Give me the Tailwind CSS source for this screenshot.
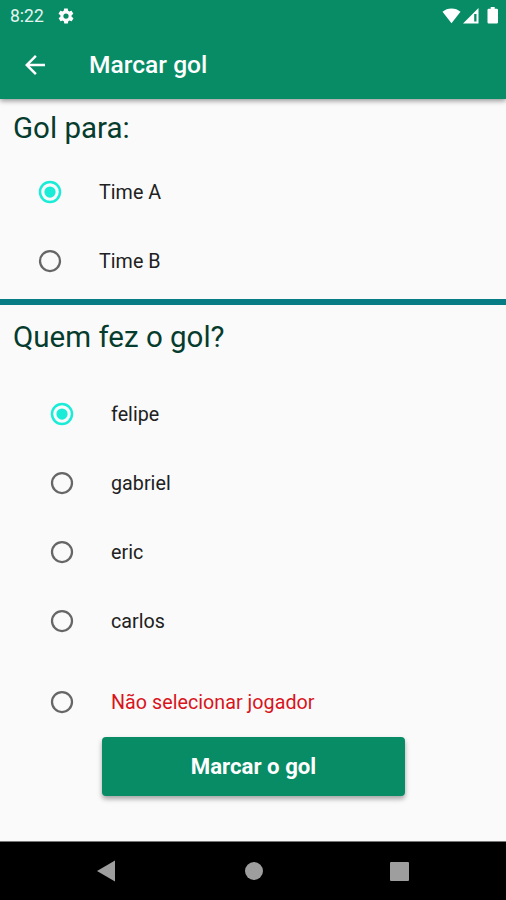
<!DOCTYPE html>
<html lang="pt-BR">
<head>
<meta charset="utf-8">
<meta name="viewport" content="width=device-width, initial-scale=1">
<title>Marcar gol</title>
<script src="https://cdn.jsdelivr.net/npm/@tailwindcss/browser@4"></script>
</head>
<body class="w-[506px] h-[900px] overflow-hidden bg-[#fafafa] flex flex-col font-[Roboto,sans-serif] text-[#212121]">
<header class="h-[99px] shrink-0 bg-[#078c66] text-white shadow-[0_2px_5px_rgba(0,0,0,0.4)] relative">
  <div class="h-[30px] flex items-center pl-2.5 pr-[7px]">
    <span class="text-[17.5px] leading-[30px] pt-[2px] text-white/90 w-[47px]">8:22</span>
    <svg class="w-[18px] h-[18px] mt-px" viewBox="0 0 24 24" fill="currentColor"><path d="M19.4 13c0-.3.1-.6.1-1s0-.7-.1-1l2.1-1.600c.2-.2.2-.4.1-.6l-2-3.500c-.1-.2-.4-.3-.6-.2l-2.500 1c-.5-.4-1.100-.7-1.700-1l-.4-2.600c0-.3-.2-.5-.5-.5h-4c-.2 0-.4.2-.5.4l-.4 2.700c-.6.2-1.100.6-1.700 1l-2.500-1c-.2-.1-.5 0-.6.2l-2 3.500c-.1.200-.1.500.1.600L4.600 11c0 .3-.1.700-.1 1s0 .7.100 1l-2.100 1.700c-.2.100-.2.400-.1.600l2 3.500c.1.200.4.300.6.200l2.500-1c.5.400 1.100.7 1.700 1l.4 2.600c0 .2.200.4.5.4h4c.2 0 .4-.2.500-.4l.4-2.700c.6-.2 1.100-.6 1.700-1l2.500 1c.2.100.5 0 .6-.2l2-3.500c.1-.2.1-.5-.1-.6L19.400 13zM12 15.500a3.500 3.500 0 1 1 0-7 3.500 3.500 0 0 1 0 7z"/></svg>
    <div class="ml-auto flex items-center gap-[2px]">
      <svg class="w-[19px] h-[17px]" viewBox="0 0 19 17" fill="currentColor"><path d="M9.500 16.300 0.500 4.800C3 2.700 6 1.500 9.500 1.500s6.500 1.200 9 3.300z"/></svg>
      <svg class="w-[16px] h-[17px]" viewBox="0 0 16 17"><path fill="currentColor" fill-rule="evenodd" d="M0 16.500 15.500 1v15.500zM11.200 7v7.500h2.300V7z"/></svg>
      <svg class="w-[12px] h-[17px] ml-[6px]" viewBox="0 0 12 17" fill="currentColor"><path d="M3.700 0h4v1.700h2.100q1.200 0 1.200 1.200v12.400q0 1.200-1.200 1.200H1.700q-1.200 0-1.200-1.200V2.900q0-1.200 1.200-1.200h2z"/></svg>
    </div>
  </div>
  <div class="h-[69px] flex items-center pl-[20px]">
    <svg class="w-[30px] h-[30px]" viewBox="0 0 24 24" fill="currentColor"><path d="M20 11H7.830l5.590-5.590L12 4l-8 8 8 8 1.410-1.410L7.830 13H20v-2z"/></svg>
    <h1 class="ml-[39px] pt-[2px] text-[24.6px] font-medium">Marcar gol</h1>
  </div>
</header>
<main class="flex-1 flex flex-col">
  <section class="h-[200px] shrink-0">
    <h2 class="h-[59px] pl-[13px] text-[29.5px] leading-[59px] text-[#063c2d]">Gol para:</h2>
    <div class="h-[69px] flex items-center pl-[35px]">
      <svg class="w-[30px] h-[30px] mb-[2px] text-[#1aecd8]" viewBox="0 0 24 24"><circle cx="12" cy="12" r="8" fill="none" stroke="currentColor" stroke-width="2"/><circle cx="12" cy="12" r="4.500" fill="currentColor"/></svg>
      <span class="ml-[34px] text-[19.7px] tracking-[0.03px]">Time A</span>
    </div>
    <div class="h-[69px] flex items-center pl-[35px]">
      <svg class="w-[30px] h-[30px] mb-[2px] text-[#666]" viewBox="0 0 24 24"><circle cx="12" cy="12" r="8" fill="none" stroke="currentColor" stroke-width="1.800"/></svg>
      <span class="ml-[34px] text-[19.7px] tracking-[0.03px]">Time B</span>
    </div>
  </section>
  <div class="h-[6px] shrink-0 bg-[#087c85]"></div>
  <section class="flex flex-col">
    <h2 class="h-[75px] pl-[13px] pt-[2px] text-[29.5px] leading-[60px] text-[#063c2d]">Quem fez o gol?</h2>
    <div class="h-[69px] flex items-center pl-[47px]">
      <svg class="w-[30px] h-[30px] mb-[2px] text-[#1aecd8]" viewBox="0 0 24 24"><circle cx="12" cy="12" r="8" fill="none" stroke="currentColor" stroke-width="2"/><circle cx="12" cy="12" r="4.500" fill="currentColor"/></svg>
      <span class="ml-[34px] text-[19.7px] tracking-[0.03px]">felipe</span>
    </div>
    <div class="h-[69px] flex items-center pl-[47px]">
      <svg class="w-[30px] h-[30px] mb-[2px] text-[#666]" viewBox="0 0 24 24"><circle cx="12" cy="12" r="8" fill="none" stroke="currentColor" stroke-width="1.800"/></svg>
      <span class="ml-[34px] text-[19.7px] tracking-[0.03px]">gabriel</span>
    </div>
    <div class="h-[69px] flex items-center pl-[47px]">
      <svg class="w-[30px] h-[30px] mb-[2px] text-[#666]" viewBox="0 0 24 24"><circle cx="12" cy="12" r="8" fill="none" stroke="currentColor" stroke-width="1.800"/></svg>
      <span class="ml-[34px] text-[19.7px] tracking-[0.03px]">eric</span>
    </div>
    <div class="h-[69px] flex items-center pl-[47px]">
      <svg class="w-[30px] h-[30px] mb-[2px] text-[#666]" viewBox="0 0 24 24"><circle cx="12" cy="12" r="8" fill="none" stroke="currentColor" stroke-width="1.800"/></svg>
      <span class="ml-[34px] text-[19.7px] tracking-[0.03px]">carlos</span>
    </div>
    <div class="h-[69px] mt-[12px] flex items-center pl-[47px]">
      <svg class="w-[30px] h-[30px] mb-[2px] text-[#666]" viewBox="0 0 24 24"><circle cx="12" cy="12" r="8" fill="none" stroke="currentColor" stroke-width="1.800"/></svg>
      <span class="ml-[34px] text-[19.7px] tracking-[0.03px] text-[#d8141c]">Não selecionar jogador</span>
    </div>
    <button class="w-[303px] h-[59px] ml-[102px] rounded-[4px] bg-[#078c66] text-white text-[22.2px] font-bold shadow-[0_3px_5px_rgba(0,0,0,0.35)]">Marcar o gol</button>
  </section>
</main>
<nav class="h-[59px] shrink-0 bg-black border-t border-[#777] flex items-center text-[#9e9e9e]">
  <svg class="w-[18px] h-[22px] ml-[97px]" viewBox="0 0 18 22" fill="currentColor"><path d="M18 .5v21L0 11z"/></svg>
  <div class="size-[18px] ml-[130px] rounded-full bg-[#9e9e9e]"></div>
  <div class="size-[19px] ml-[127px] rounded-[1px] bg-[#9e9e9e]"></div>
</nav>
</body>
</html>
